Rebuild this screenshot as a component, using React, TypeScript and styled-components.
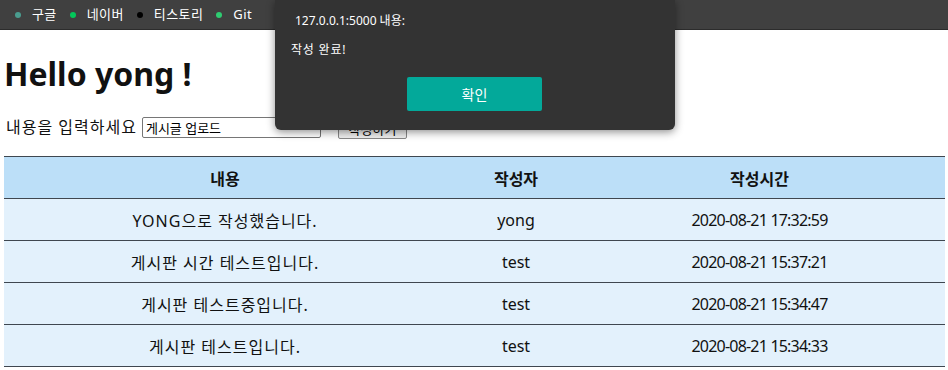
import React from 'react'
import styled, { createGlobalStyle } from 'styled-components'

const GlobalStyle = createGlobalStyle`
  body {
    margin: 0;
    background: #fff;
    font-family: 'Noto Sans', 'Noto Sans CJK KR', sans-serif;
    color: #111;
  }
`

const Page = styled.div`
  position: relative;
  width: 948px;
  height: 370px;
  overflow: hidden;
`

const NavBar = styled.nav`
  display: flex;
  align-items: center;
  height: 29px;
  padding-left: 15px;
  gap: 13px;
  background: #404040;
  border-bottom: 1px solid #2c2c2c;
`

const NavItem = styled.span<{ dot: string }>`
  display: flex;
  align-items: center;
  gap: 11px;
  color: #fff;
  font-size: 13px;
  letter-spacing: 0.4px;
  line-height: 1;
  &::before {
    content: '';
    width: 6px;
    height: 6px;
    border-radius: 50%;
    background: ${p => p.dot};
  }
`

const Title = styled.h1`
  margin: 23px 0 0 4px;
  font-size: 32px;
  font-weight: 700;
  line-height: 42px;
`

const Form = styled.div`
  display: flex;
  align-items: center;
  margin: 21px 0 0 6px;
  height: 22px;
  font-size: 16px;
`

const Label = styled.span`
  margin-right: 5px;
  line-height: 22px;
  letter-spacing: 1px;
`

const TextInput = styled.input`
  width: 171px;
  height: 19px;
  padding: 0 3px;
  border: 1px solid #767676;
  border-radius: 2px;
  font-family: inherit;
  font-size: 13px;
  margin-right: 17px;
`

const Submit = styled.button`
  width: 69px;
  height: 21px;
  margin-top: 3px;
  border: 1px solid #888;
  border-radius: 2px;
  background: #efefef;
  font-family: inherit;
  font-size: 13px;
  padding: 0;
`

const Table = styled.div`
  margin: 18px 3px 0 4px;
  border-top: 1px solid #3f4750;
`

const Row = styled.div<{ head?: boolean }>`
  display: grid;
  grid-template-columns: 442px 140px 1fr;
  height: 41px;
  align-items: center;
  background: ${p => (p.head ? '#bcdff8' : '#e3f1fc')};
  border-bottom: 1px solid #3f4750;
  font-size: 16px;
  font-weight: ${p => (p.head ? 700 : 400)};
`

const Cell = styled.div<{ pull?: number; spacing?: number }>`
  text-align: center;
  padding-right: ${p => p.pull || 0}px;
  letter-spacing: ${p => p.spacing || 0}px;
`

const Dialog = styled.div`
  position: absolute;
  left: 275px;
  top: 0;
  width: 400px;
  height: 130px;
  background: #333;
  border-radius: 0 0 6px 6px;
  box-shadow: 0 2px 8px rgba(0, 0, 0, 0.45);
  color: #fff;
  font-size: 12px;
`

const DialogTitle = styled.div`
  position: absolute;
  left: 20px;
  top: 13px;
  line-height: 16px;
`

const DialogText = styled.div`
  position: absolute;
  left: 16px;
  top: 42px;
  line-height: 16px;
  letter-spacing: 0.8px;
`

const OkButton = styled.button`
  position: absolute;
  left: 132px;
  top: 77px;
  width: 135px;
  height: 34px;
  border: none;
  border-radius: 2px;
  background: #03a99a;
  color: #fff;
  font-family: inherit;
  font-size: 14px;
`

const posts = [
  { text: 'YONG으로 작성했습니다.', user: 'yong', time: '2020-08-21 17:32:59' },
  { text: '게시판 시간 테스트입니다.', user: 'test', time: '2020-08-21 15:37:21' },
  { text: '게시판 테스트중입니다.', user: 'test', time: '2020-08-21 15:34:47' },
  { text: '게시판 테스트입니다.', user: 'test', time: '2020-08-21 15:34:33' }
]

const App: React.FC = () => {
  return (
    <Page>
      <GlobalStyle />
      <NavBar>
        <NavItem dot="#4a9d8f">구글</NavItem>
        <NavItem dot="#03c75a">네이버</NavItem>
        <NavItem dot="#000">티스토리</NavItem>
        <NavItem dot="#2ecc71">Git</NavItem>
      </NavBar>
      <Title>Hello yong !</Title>
      <Form>
        <Label>내용을 입력하세요</Label>
        <TextInput defaultValue="게시글 업로드" />
        <Submit>작성하기</Submit>
      </Form>
      <Table>
        <Row head>
          <Cell>내용</Cell>
          <Cell>작성자</Cell>
          <Cell pull={12}>작성시간</Cell>
        </Row>
        {posts.map(p => (
          <Row key={p.time}>
            <Cell spacing={1}>{p.text}</Cell>
            <Cell>{p.user}</Cell>
            <Cell pull={12} spacing={-0.8}>
              {p.time}
            </Cell>
          </Row>
        ))}
      </Table>
      <Dialog>
        <DialogTitle>127.0.0.1:5000 내용:</DialogTitle>
        <DialogText>작성 완료!</DialogText>
        <OkButton>확인</OkButton>
      </Dialog>
    </Page>
  )
}

export default App
